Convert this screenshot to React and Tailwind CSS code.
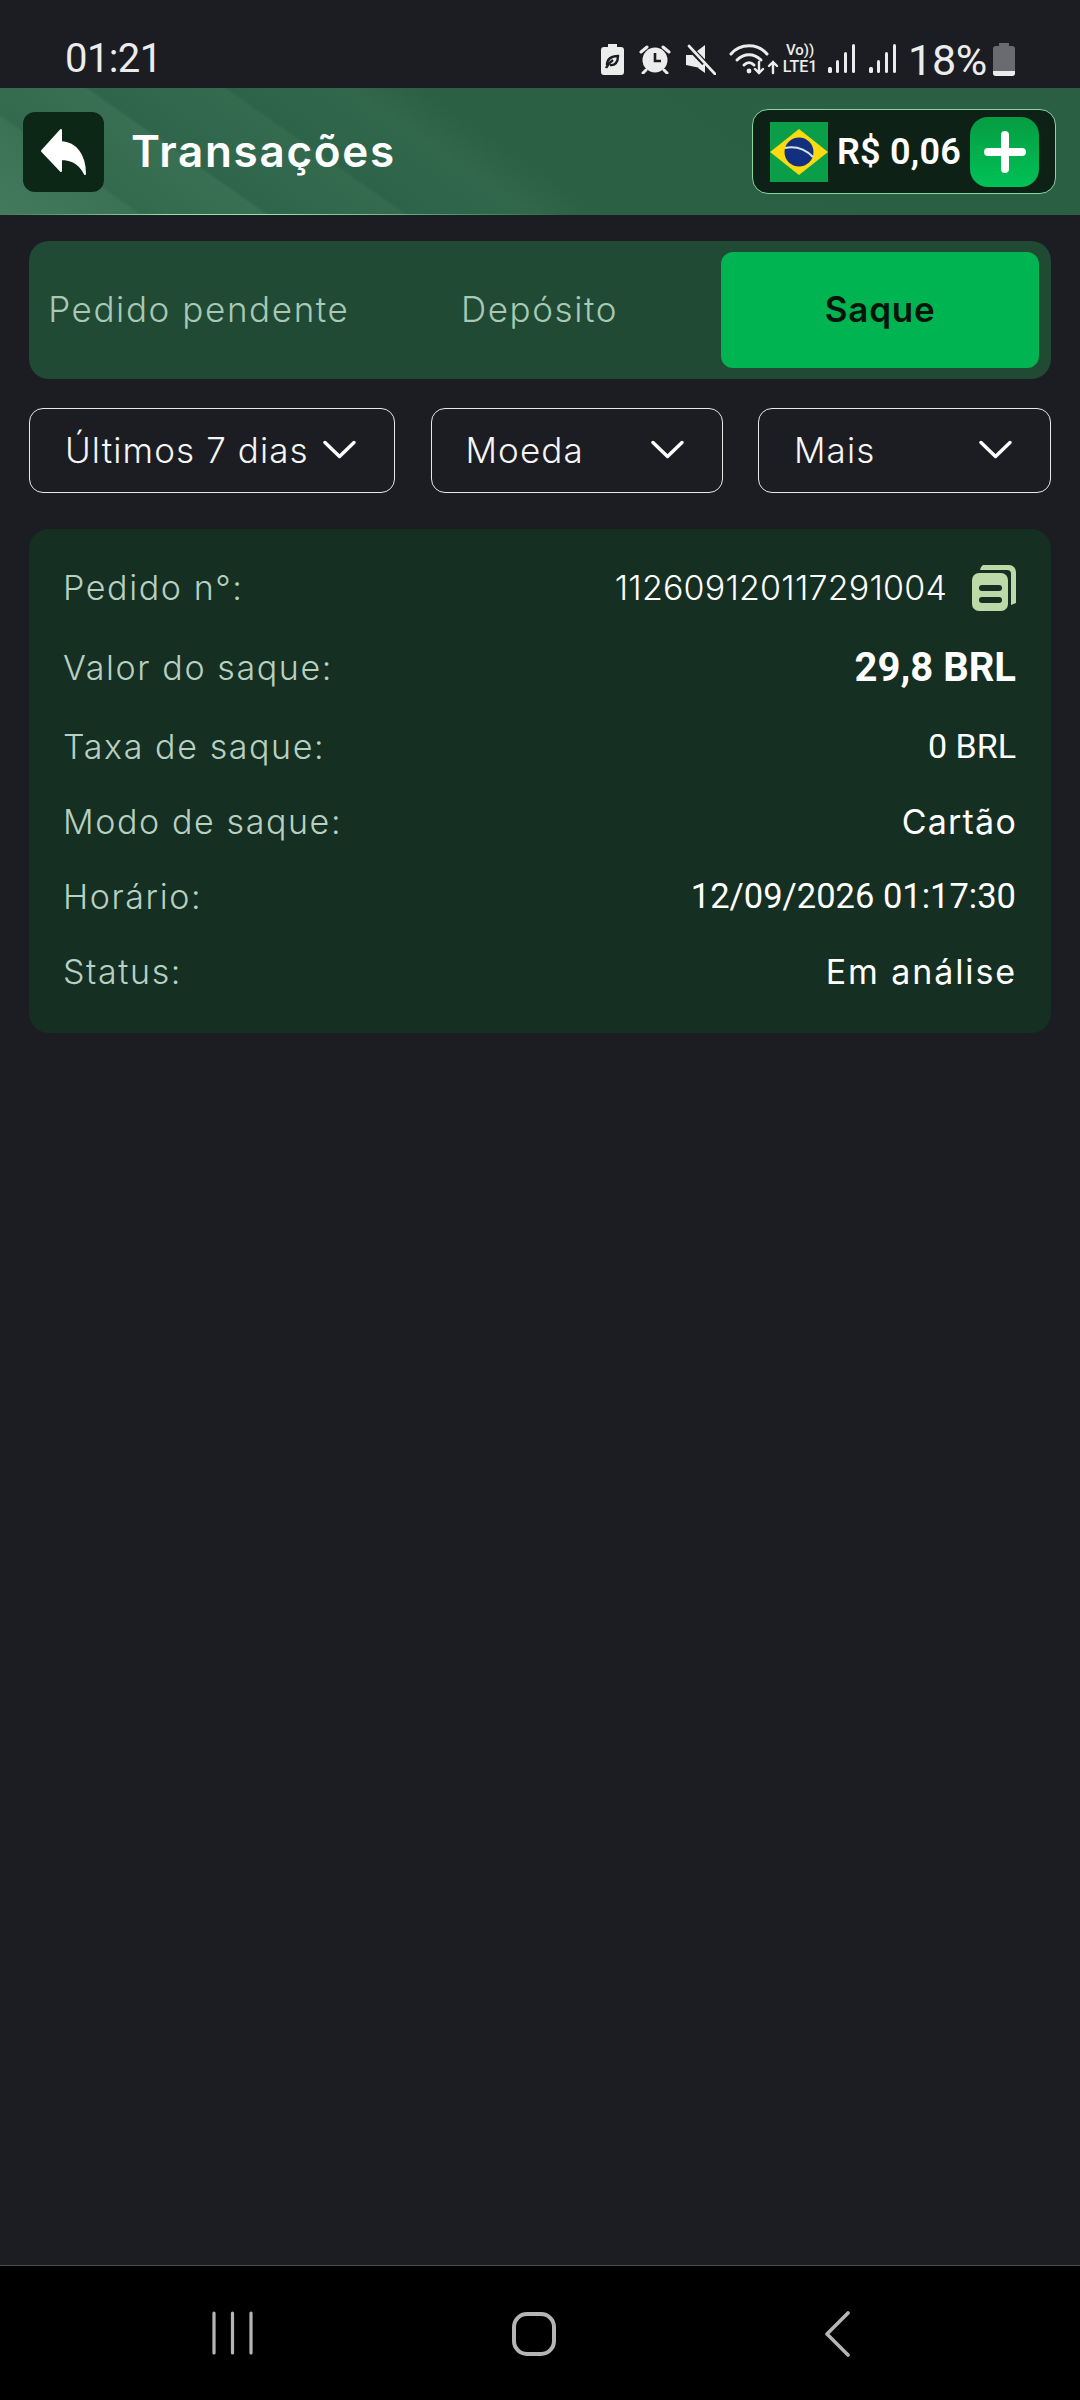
const SANS = "font-['Inter','Noto_Sans',sans-serif]"

const ROWS = [
  { label: 'Pedido n°:', value: '112609120117291004', h: 'h-[43px]', copy: true, cls: 'text-[34px] tracking-[0.2px] font-light text-white' },
  { label: 'Valor do saque:', value: '29,8 BRL', h: 'h-[49px]', roboto: true, cls: 'text-[40px] font-bold text-white' },
  { label: 'Taxa de saque:', value: '0 BRL', h: 'h-[41px]', roboto: true, cls: 'text-[34px] text-white' },
  { label: 'Modo de saque:', value: 'Cartão', h: 'h-[41px]', cls: 'text-[34px] tracking-[1.2px] -mr-[1px] text-white' },
  { label: 'Horário:', value: '12/09/2026 01:17:30', h: 'h-[41px]', roboto: true, cls: 'text-[34.5px] text-white' },
  { label: 'Status:', value: 'Em análise', h: 'h-[41px]', cls: 'text-[34px] tracking-[1.9px] -mr-[1px] text-white' },
]

function BatteryLeaf() {
  return (
    <svg width="23" height="32" viewBox="0 0 23 32" className="block">
      <path d="M7 1h9v3h4a3 3 0 0 1 3 3v22a3 3 0 0 1-3 3H3a3 3 0 0 1-3-3V7a3 3 0 0 1 3-3h4z" fill="#ececec" />
      <path d="M6 22c0-6 4-9 11-9 0 6-3 10-8 9M5 25c2-4 4-6 7-8" fill="none" stroke="#1c1d22" strokeWidth="2.4" />
    </svg>
  )
}

function Alarm() {
  return (
    <svg width="32" height="30" viewBox="0 0 32 30" className="block">
      <circle cx="16" cy="16" r="12.5" fill="#ececec" />
      <path d="M16 9v8h6" fill="none" stroke="#1c1d22" strokeWidth="2.6" />
      <path d="M2 8l6-5M30 8l-6-5M7 26l-3 3M25 26l3 3" stroke="#ececec" strokeWidth="3" strokeLinecap="round" />
    </svg>
  )
}

function Mute() {
  return (
    <svg width="31" height="31" viewBox="0 0 31 31" className="block">
      <path d="M1 11h6l13-10v24L1 21z" fill="#ececec" />
      <path d="M4 3l25 26" stroke="#1c1d22" strokeWidth="6" />
      <path d="M4 2l26 28" stroke="#ececec" strokeWidth="2.6" strokeLinecap="round" />
      <path d="M20 19v10l-7-5z" fill="#ececec" />
    </svg>
  )
}

function Wifi() {
  return (
    <svg width="52" height="34" viewBox="0 0 52 34" className="block">
      <g fill="none" stroke="#ececec" strokeLinecap="round">
        <path d="M2 12C11 1 29 1 38 12" strokeWidth="3" />
        <path d="M8 18c7-7 17-7 24 0" strokeWidth="3" />
        <path d="M15 23c3-3 7-3 10 0" strokeWidth="3" />
        <path d="M30 20v11M26 27l4 4 4-4" strokeWidth="2.4" />
        <path d="M44 31V20M40 24l4-4 4 4" strokeWidth="2.4" />
      </g>
      <circle cx="20" cy="29" r="2.4" fill="#ececec" />
    </svg>
  )
}

function Signal() {
  return (
    <svg width="28" height="30" viewBox="0 0 28 30" className="block">
      <rect x="0" y="23" width="4" height="6" rx="1.5" fill="#ececec" />
      <rect x="8" y="16" width="3" height="13" rx="1.5" fill="#ececec" />
      <rect x="16" y="8" width="3" height="21" rx="1.5" fill="#ececec" />
      <rect x="24" y="0" width="3" height="29" rx="1.5" fill="#ececec" />
    </svg>
  )
}

function Battery() {
  return (
    <svg width="22" height="33" viewBox="0 0 22 33" className="block">
      <path d="M6 0h10v3h3a3 3 0 0 1 3 3v24a3 3 0 0 1-3 3H3a3 3 0 0 1-3-3V6a3 3 0 0 1 3-3h3z" fill="#6a6b70" />
      <path d="M0 28h22v2a3 3 0 0 1-3 3H3a3 3 0 0 1-3-3z" fill="#ececec" />
    </svg>
  )
}

function StatusBar() {
  return (
    <div className="h-[88px] flex items-end pb-[6px] pl-[65px] pr-[65px] text-[#ececec] font-['Roboto',sans-serif]">
      <span className="text-[40px] leading-[46px] -tracking-[0.6px]">01:21</span>
      <div className="ml-auto flex items-center h-[40px] -translate-y-[3px]">
        <BatteryLeaf />
        <div className="ml-[15px]"><Alarm /></div>
        <div className="ml-[14px]"><Mute /></div>
        <div className="ml-[13px]"><Wifi /></div>
        <div className="ml-0 w-[38px] flex flex-col items-center font-medium leading-[15px]">
          <span className="text-[15px] h-[16px]">Vo))</span>
          <span className="text-[16px] h-[16px] whitespace-nowrap">LTE1</span>
        </div>
        <div className="ml-[9px]"><Signal /></div>
        <div className="ml-[13px]"><Signal /></div>
        <span className="ml-[11px] text-[43px] leading-[40px] translate-y-[1px] -tracking-[0.3px]">18%</span>
        <div className="ml-[6px]"><Battery /></div>
      </div>
    </div>
  )
}

function Flag() {
  return (
    <svg width="58" height="60" viewBox="0 0 58 60" className="block shrink-0">
      <rect width="58" height="60" fill="#0a9e48" />
      <path d="M29 7l29 23-29 23L0 30z" fill="#fdd90f" />
      <circle cx="29" cy="30" r="14.5" fill="#12307f" />
      <path d="M15 26c10-2 20 1 28 9" fill="none" stroke="#d8e4ec" strokeWidth="2" />
    </svg>
  )
}

function Header() {
  return (
    <div className="relative h-[127px] flex items-center pl-[23px] pr-[24px] bg-[linear-gradient(35deg,#437a5d_0%,#3b7155_11%,#33694d_11.5%,#396f53_21%,#2f654a_21.5%,#346a4e_32%,#2d6348_32.5%,#31674b_42%,#2b6045_48%,#2b5f44_100%)]">
      <div className="absolute left-0 bottom-0 h-[1px] w-[560px] bg-[linear-gradient(90deg,transparent,#8fe5ae_30%,#8fe5ae_50%,transparent)]" />
      <button className="w-[81px] h-[80px] rounded-[12px] bg-[#0c2716] flex items-center justify-center">
        <svg width="48" height="50" viewBox="0 0 48 50" className="block">
          <path d="M2 24L21 3v12c15 1 24 13 24 32-5-10-12-15-24-15v12z" fill="#fff" stroke="#fff" strokeWidth="2" strokeLinejoin="round" />
        </svg>
      </button>
      <h1 className={`${SANS} ml-[27px] pb-[2px] text-[44px] font-semibold tracking-[1.7px] text-white`}>Transações</h1>
      <div className="ml-auto w-[304px] h-[85px] rounded-[16px] border-[1.5px] border-[#86d8a0] bg-[#0e2117] flex items-center pl-[17px] pr-[16px]">
        <Flag />
        <span className="ml-[9px] font-['Roboto',sans-serif] text-[36px] font-semibold text-white tracking-[0.2px] whitespace-nowrap">R$ 0,06</span>
        <button className="ml-auto w-[69px] h-[70px] rounded-[18px] bg-[linear-gradient(180deg,#069c42,#00c156)] flex items-center justify-center">
          <svg width="42" height="42" viewBox="0 0 42 42" className="block">
            <path d="M4 21h34M21 4v34" stroke="#fff" strokeWidth="8" strokeLinecap="round" />
          </svg>
        </button>
      </div>
    </div>
  )
}

function Tabs() {
  return (
    <div className={`${SANS} h-[138px] rounded-[20px] bg-[#214a35] pl-[11px] pr-[12px] py-[11px] flex gap-[23px] text-[35px]`}>
      <div className="flex-1 flex items-center justify-center pb-[2px] text-[#a7c9b5] font-light tracking-[1.6px] whitespace-nowrap">Pedido pendente</div>
      <div className="flex-1 flex items-center justify-center pb-[2px] text-[#a7c9b5] font-light tracking-[1.6px]">Depósito</div>
      <div className="flex-1 flex items-center justify-center pb-[2px] rounded-[12px] bg-[#00b452] text-[#06130b] font-semibold tracking-[0.8px]">Saque</div>
    </div>
  )
}

function Select({ label, cls }) {
  return (
    <div className={`${cls} h-[85px] rounded-[14px] border-[1.5px] border-[#e8e8e8] flex items-center justify-between text-[#f5f5f5]`}>
      <span className="text-[35px] font-light tracking-[1.1px] whitespace-nowrap">{label}</span>
      <svg width="33" height="19" viewBox="0 0 33 19" className="block shrink-0 -translate-y-[1px]">
        <path d="M2 2.5l14.5 14 14.5-14" fill="none" stroke="#fff" strokeWidth="3.4" strokeLinecap="round" strokeLinejoin="round" />
      </svg>
    </div>
  )
}

function CopyIcon() {
  return (
    <svg width="44" height="46" viewBox="0 0 44 46" className="block">
      <path d="M11 0h26a7 7 0 0 1 7 7v31l-5 2V9a4 4 0 0 0-4-4H8a7 7 0 0 1 3-5z" fill="#bcd9a8" />
      <rect x="0" y="8" width="36" height="38" rx="7" fill="#bcd9a8" />
      <rect x="7" y="20" width="23" height="6" rx="3" fill="#152f22" />
      <rect x="7" y="32" width="23" height="6" rx="3" fill="#152f22" />
    </svg>
  )
}

function Card() {
  return (
    <div className={`${SANS} mt-[36px] rounded-[20px] bg-[#152f22] pt-[37px] pb-[41px] pl-[34px] pr-[35px] flex flex-col gap-[34px]`}>
      {ROWS.map(row => (
        <div key={row.label} className={`${row.h} flex items-center justify-between`}>
          <span className="text-[34px] font-light tracking-[1.6px] text-[#b7d0c1] whitespace-nowrap">{row.label}</span>
          <div className="flex items-center gap-[25px]">
            <span className={`${row.roboto ? "font-['Roboto',sans-serif]" : ''} ${row.cls} whitespace-nowrap`}>{row.value}</span>
            {row.copy && <CopyIcon />}
          </div>
        </div>
      ))}
    </div>
  )
}

function NavBar() {
  return (
    <div className="h-[135px] bg-black border-t-[1.5px] border-[#4c4d50] flex items-start pt-[45px] text-[#b5b5b5]">
      <div className="ml-[212px]">
        <svg width="41" height="44" viewBox="0 0 41 44" className="block">
          <path d="M2 2v40M20.5 2v40M39 2v40" fill="none" stroke="currentColor" strokeWidth="3.2" strokeLinecap="round" />
        </svg>
      </div>
      <div className="ml-[259px]">
        <svg width="44" height="46" viewBox="0 0 44 46" className="block">
          <rect x="2" y="3" width="40" height="40" rx="13" fill="none" stroke="currentColor" strokeWidth="4" />
        </svg>
      </div>
      <div className="ml-[268px]">
        <svg width="26" height="46" viewBox="0 0 26 46" className="block">
          <path d="M24 2L3 23l21 21" fill="none" stroke="currentColor" strokeWidth="3.6" strokeLinecap="round" strokeLinejoin="round" />
        </svg>
      </div>
    </div>
  )
}

export default function App() {
  return (
    <div className="w-[1080px] h-[2400px] flex flex-col bg-[#1c1d22] overflow-hidden">
      <StatusBar />
      <Header />
      <main className="flex-1 px-[29px] pt-[26px]">
        <Tabs />
        <div className={`${SANS} mt-[29px] flex justify-between`}>
          <Select label="Últimos 7 dias" cls="w-[366px] pl-[35px] pr-[38px]" />
          <Select label="Moeda" cls="w-[292px] pl-[34px] pr-[38px]" />
          <Select label="Mais" cls="w-[293px] pl-[35px] pr-[38px]" />
        </div>
        <Card />
      </main>
      <NavBar />
    </div>
  )
}
